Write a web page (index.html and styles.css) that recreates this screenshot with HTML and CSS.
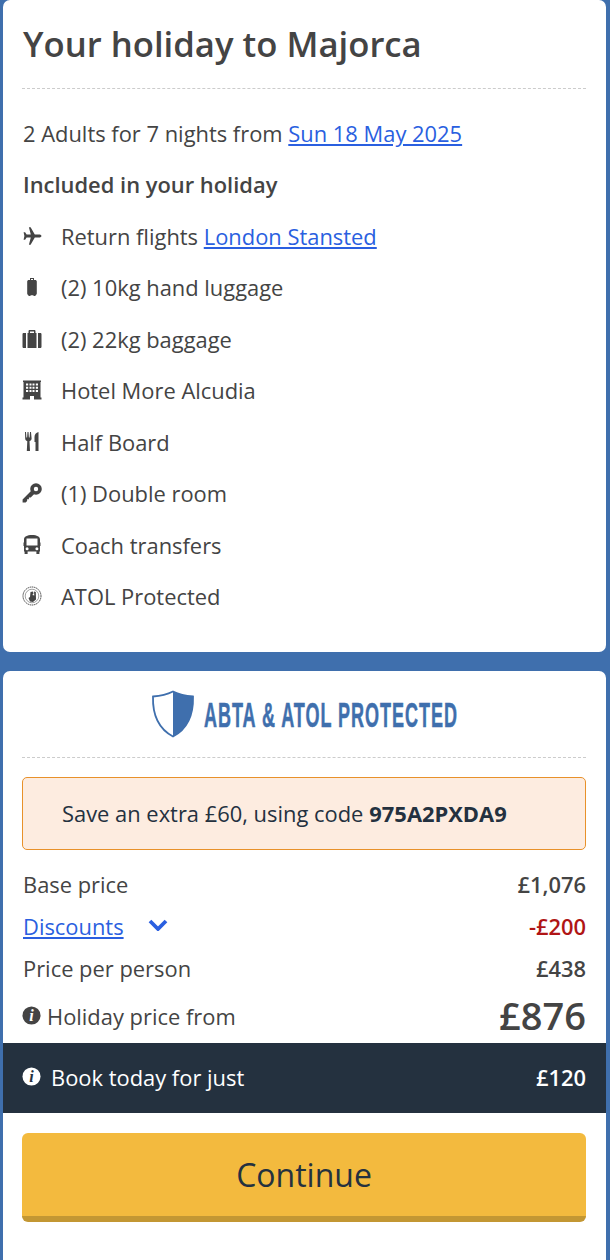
FILE: index.html
```html
<!DOCTYPE html>
<html lang="en">
<head>
<meta charset="utf-8">
<title>Your holiday to Majorca</title>
<link rel="stylesheet" href="styles.css">
</head>
<body>
<section class="card summary">
  <h1 class="title">Your holiday to Majorca</h1>
  <p class="intro">2 Adults for 7 nights from <a href="#">Sun 18 May 2025</a></p>
  <h2 class="sub">Included in your holiday</h2>
  <ul class="items">
    <li><svg class="ico" viewBox="0 0 20 20"><path d="M19.500 10c0-.9-1.200-1.500-2.300-1.500h-4.400L8.600 1.200H6.900l1.900 7.300H4.600L3.100 6.200H1.600l.8 3.800-.8 3.800h1.500l1.500-2.300h4.200l-1.900 7.300h1.700l4.200-7.300h4.400c1.100 0 2.300-.6 2.300-1.500z"/></svg><span>Return flights <a href="#">London Stansted</a></span></li>
    <li><svg class="ico" viewBox="0 0 20 20"><path fill-rule="evenodd" d="M8 1h4v2h1.200c.9 0 1.600.7 1.600 1.600v12c0 .9-.6 1.500-1.300 1.600v.8h-2v-.8H8.500v.8h-2v-.8c-.7-.1-1.300-.7-1.300-1.600v-12C5.200 3.700 5.900 3 6.800 3H8zm1 1v1h2V2z"/></svg><span>(2) 10kg hand luggage</span></li>
    <li><svg class="ico" viewBox="0 0 20 20"><path fill-rule="evenodd" d="M6.500 4V2.200C6.500 1.500 7 1 7.700 1h4.600c.7 0 1.200.5 1.200 1.200V4h1v15h-9V4zM8 4h4V2.500H8zM4 4v15H1.800C1 19 .5 18.500.5 17.700V5.300C.5 4.500 1 4 1.800 4zm12 0h2.200c.8 0 1.300.5 1.300 1.300v12.400c0 .8-.5 1.300-1.300 1.300H16z"/></svg><span>(2) 22kg baggage</span></li>
    <li><svg class="ico" viewBox="0 0 20 20"><path fill-rule="evenodd" d="M1 .5h18v1.500h-.5v15.500h1V19.500H12v-3.500H8v3.500H.500v-2h1V2H1zM4 3.500v2h2.200v-2zm3.500 0v2h2v-2zm3 0v2h2v-2zm3.300 0v2H16v-2zM4 6.800v2h2.200v-2zm3.500 0v2h2v-2zm3 0v2h2v-2zm3.300 0v2H16v-2zM4 10.100v2h2.200v-2zm3.500 0v2h2v-2zm3 0v2h2v-2zm3.300 0v2H16v-2z"/></svg><span>Hotel More Alcudia</span></li>
    <li><svg class="ico" viewBox="0 0 20 20"><path d="M3 0h1l.4 5.500h.7L5.500 0h1l.4 5.500h.7L8 0h1l.6 6.500c0 1.400-.9 2.400-2.100 2.700l.5 9.800H4.800l.5-9.800C4.100 8.900 3.200 7.900 3.200 6.500zM12.500 10V5c0-2.500 1.500-4.500 4-5v19h-3v-9z"/></svg><span>Half Board</span></li>
    <li><svg class="ico" viewBox="0 0 20 20"><circle cx="14" cy="6" r="4" fill="none" stroke="currentColor" stroke-width="3.600"/><path d="M9.500 7.500L.6 16.500v3h3l1.500-1.500v-1.800h1.800v-1.800h1.800l3.500-3.400z"/></svg><span>(1) Double room</span></li>
    <li><svg class="ico" viewBox="0 0 20 20"><path fill-rule="evenodd" d="M10 0c5 0 8 1.500 8 4.500v3h.5V11H18v5.500h-.6v2.500h-3v-2.500H5.600V19h-3v-2.500H2V11h-.5V7.500H2v-3C2 1.500 5 0 10 0zM4.500 3.500v7h11v-7zm.6 8.800a1.500 1.500 0 1 0 0 3 1.500 1.500 0 0 0 0-3zm9.800 0a1.500 1.500 0 1 0 0 3 1.500 1.500 0 0 0 0-3z"/></svg><span>Coach transfers</span></li>
    <li><svg class="ico" viewBox="0 0 20 20"><circle cx="10" cy="10" r="9" fill="none" stroke="currentColor" stroke-width="1" stroke-dasharray="1.500 .6"/><circle cx="10" cy="10" r="6.800" fill="none" stroke="currentColor" stroke-width=".5"/><path d="M6.500 12l1.500-1 .5-5 2.500-.5.500 2-1.200 1.500 2 .5-.3-4 1.800.5.200 7.500-3 2.500-3-.5z"/></svg><span>ATOL Protected</span></li>
  </ul>
</section>
<section class="card price">
  <div class="protect">
    <svg class="shield" viewBox="0 0 44 48"><path d="M22 1.500c6 3 13 4.500 20 5 .5 17-5 32-20 40C7 38.500 1.500 23.500 2 6.500c7-.5 14-2 20-5z" fill="#fff" stroke="#3f6fad" stroke-width="1.800"/><path d="M22 1.500c6 3 13 4.500 20 5 .5 17-5 32-20 40z" fill="#3f6fad"/></svg>
    <svg class="protect-text" viewBox="0 0 254 32"><text transform="scale(.5 1)" x="0" y="29" textLength="506">ABTA &amp; ATOL PROTECTED</text></svg>
  </div>
  <div class="promo">Save an extra £60, using code <b>975A2PXDA9</b></div>
  <div class="line"><span>Base price</span><b>£1,076</b></div>
  <div class="line"><span class="disc"><a href="#">Discounts</a><svg class="chev" viewBox="0 0 20 12"><path d="M2 2l8 8 8-8" fill="none" stroke="currentColor" stroke-width="3.800"/></svg></span><b class="neg">-£200</b></div>
  <div class="line"><span>Price per person</span><b>£438</b></div>
  <div class="line total"><span class="info-label"><svg class="info" viewBox="0 0 20 20"><circle cx="10" cy="10" r="9.500" fill="currentColor"/><text class="i" x="10" y="15.500">i</text></svg>Holiday price from</span><b>£876</b></div>
  <div class="today"><span class="info-label wide"><svg class="info light" viewBox="0 0 20 20"><circle cx="10" cy="10" r="9.500" fill="currentColor"/><text class="i dark" x="10" y="15.500">i</text></svg>Book today for just</span><b>£120</b></div>
  <div class="action"><button class="continue" type="button">Continue</button></div>
</section>
</body>
</html>
```
FILE: styles.css
```css
* { box-sizing: border-box; }
html, body { height: 100%; }
body {
  margin: 0;
  padding: 0 4px 0 3px;
  background: #3f6fad;
  color: #444;
  font-family: "Open Sans", sans-serif;
  font-size: 21.900px;
  line-height: 30px;
  overflow: hidden;
}
a { color: #2a5fe0; text-decoration: underline; }
.card { background: #fff; border-radius: 7px; padding: 0 20px 0 19px; }
.summary { height: 652px; padding-top: 20px; }
.title {
  margin: 0;
  height: 69px;
  border-bottom: 1px dashed #ccc;
  font-size: 34.700px;
  font-weight: 600;
  line-height: 48px;
  text-indent: 1px;
}
.intro { margin: 30px 0 0; text-indent: 1px; }
.sub { margin: 21px 0 0; font-size: 21.900px; font-weight: 600; line-height: 30px; text-indent: 1px; }
.items { list-style: none; margin: 11px 0 0; padding: 0; }
.items li { display: flex; align-items: center; height: 51.500px; }
.ico { width: 20px; height: 20px; margin: -2px 19px 0 0; fill: currentColor; flex: none; }
.price { margin-top: 19px; height: 620px; }
.protect {
  height: 87px;
  display: flex;
  align-items: center;
  justify-content: center;
  gap: 9px;
  border-bottom: 1px dashed #ccc;
}
.shield { width: 44px; height: 48px; }
.protect-text { width: 254px; height: 32px; overflow: visible; }
.protect-text text {
  font-family: "Liberation Sans", sans-serif;
  font-weight: 700;
  font-size: 36px;
  fill: #3f6fad;
  stroke: #3f6fad;
  stroke-width: .6px;
}
.promo {
  margin-top: 19px;
  height: 73px;
  display: flex;
  align-items: center;
  gap: 6px;
  padding-left: 39px;
  background: #fdece0;
  border: 1px solid #e8912a;
  border-radius: 5px;
  color: #24313f;
}
.promo b { font-weight: 700; }
.line { display: flex; justify-content: space-between; align-items: center; height: 42px; padding-left: 1px; }
.promo + .line { margin-top: 14px; }
.line b { font-weight: 600; }
.neg { color: #b01515; }
.disc { display: flex; align-items: center; gap: 24px; }
.chev { width: 20px; height: 12px; color: #2a5fe0; margin-top: -4px; }
.total { height: 50px; padding-left: 0; }
.total .info-label { padding-top: 4px; }
.total b { font-size: 38px; }
.info-label { display: flex; align-items: center; gap: 6px; }
.info-label.wide { gap: 10px; }
.info { width: 19px; height: 19px; color: #444; margin-top: -4px; }
.info.light { color: #fff; }
.i { font-family: "Liberation Serif", serif; font-style: italic; font-weight: 700; font-size: 17px; text-anchor: middle; fill: #fff; }
.i.dark { fill: #24313f; }
.today {
  margin: 3px -20px 0 -19px;
  height: 70px;
  padding: 0 20px 0 19px;
  background: #24313f;
  color: #fff;
  display: flex;
  justify-content: space-between;
  align-items: center;
}
.today b { font-weight: 600; }
.action { padding-top: 20px; }
.continue {
  display: block;
  width: 100%;
  height: 89px;
  border: 0;
  border-bottom: 6px solid #c39733;
  border-radius: 6px;
  background: #f3ba3e;
  color: #24313f;
  font-family: "Open Sans", sans-serif;
  font-size: 32px;
}
```
